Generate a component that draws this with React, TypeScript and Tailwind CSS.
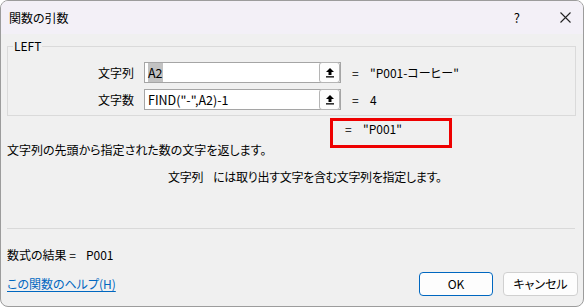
function RefButton() {
  return (
    <div className="w-[21px] h-[21px] border border-[#b5b5b5] rounded-[3px] bg-[#fdfdfd] flex items-center justify-center">
      <svg width="10" height="11" viewBox="0 0 10 11">
        <path d="M5 1 L1 5 H3.5 V8 H6.5 V5 H9 Z" fill="#000" />
        <rect x="1" y="9.2" width="8" height="1.3" fill="#000" />
      </svg>
    </div>
  );
}

function ArgRow({ label, value, result, selected }: { label: string; value: string; result: string; selected?: boolean }) {
  return (
    <div className="flex items-center h-[21px]">
      <div className="w-[126px] text-right">{label}</div>
      <div className="ml-[10px] w-[197px] h-[21px] bg-white border border-[#a5a5a5] flex items-center justify-between">
        <span className="pl-[3px] text-[12.5px]">
          {selected ? <span className="bg-[#c2c2c2]">{value}</span> : value}
        </span>
        <RefButton />
      </div>
      <div className="ml-[11px] w-[18px]">=</div>
      <div>{result}</div>
    </div>
  );
}

export default function App() {
  return (
    <div
      className="w-[584px] h-[307px] border border-[#9c9c9c] rounded-[8px] overflow-hidden bg-[#f0f0f0] flex flex-col text-[12px] leading-[16px] text-black [font-feature-settings:'palt']"
      style={{ fontFamily: '"Noto Sans CJK JP", "Noto Sans", sans-serif' }}
    >
      <div className="h-[33px] shrink-0 bg-[#f3f0f7] flex items-center pl-[8px]">
        <span className="pt-[1px]">関数の引数</span>
        <span className="ml-auto mr-[40px] text-[13px]">?</span>
        <svg width="11" height="11" viewBox="0 0 11 11" className="mr-[12px]">
          <path d="M0.5 0.5 L10.5 10.5 M10.5 0.5 L0.5 10.5" stroke="#222" strokeWidth="1.1" />
        </svg>
      </div>

      <div className="relative flex-1 flex flex-col">
        <fieldset className="mt-[4px] ml-[6px] mr-[7px] border border-[#dadada] pt-[8px] pb-[5px] flex flex-col gap-[6px]">
          <legend className="ml-[5px] px-[1px]">LEFT</legend>
          <ArgRow label="文字列" value="A2" result={'"P001-コーヒー"'} selected />
          <ArgRow label="文字数" value={'FIND("-",A2)-1'} result="4" />
        </fieldset>

        <div className="h-[26px] flex items-center pl-[344px]">
          <span className="w-[18px]">=</span>
          <span>"P001"</span>
        </div>
        <div className="absolute left-[329px] top-[84px] w-[122px] h-[30px] border-[3px] border-[#ee0000]" />

        <div className="pl-[6px]">文字列の先頭から指定された数の文字を返します。</div>
        <div className="mt-[11px] pl-[167px] tracking-[-0.3px]">
          文字列<span className="inline-block w-[10px]" />には取り出す文字を含む文字列を指定します。
        </div>

        <div className="mt-[43px] mx-[6px] mr-[8px] h-px bg-[#d9d9d9]" />

        <div className="mt-[18px] pl-[6px]">
          数式の結果 =<span className="inline-block w-[10px]" />P001
        </div>

        <div className="mt-[9px] flex items-center pl-[6px] pr-[5px]">
          <a className="text-[#0067c0] underline underline-offset-2">この関数のヘルプ(H)</a>
          <button className="ml-auto w-[74px] h-[24px] bg-[#fdfdfd] border border-[#0067c0] rounded-[4px]">OK</button>
          <button className="ml-[10px] w-[75px] h-[24px] bg-[#fdfdfd] border border-[#d0d0d0] rounded-[4px]">キャンセル</button>
        </div>
      </div>
    </div>
  );
}
